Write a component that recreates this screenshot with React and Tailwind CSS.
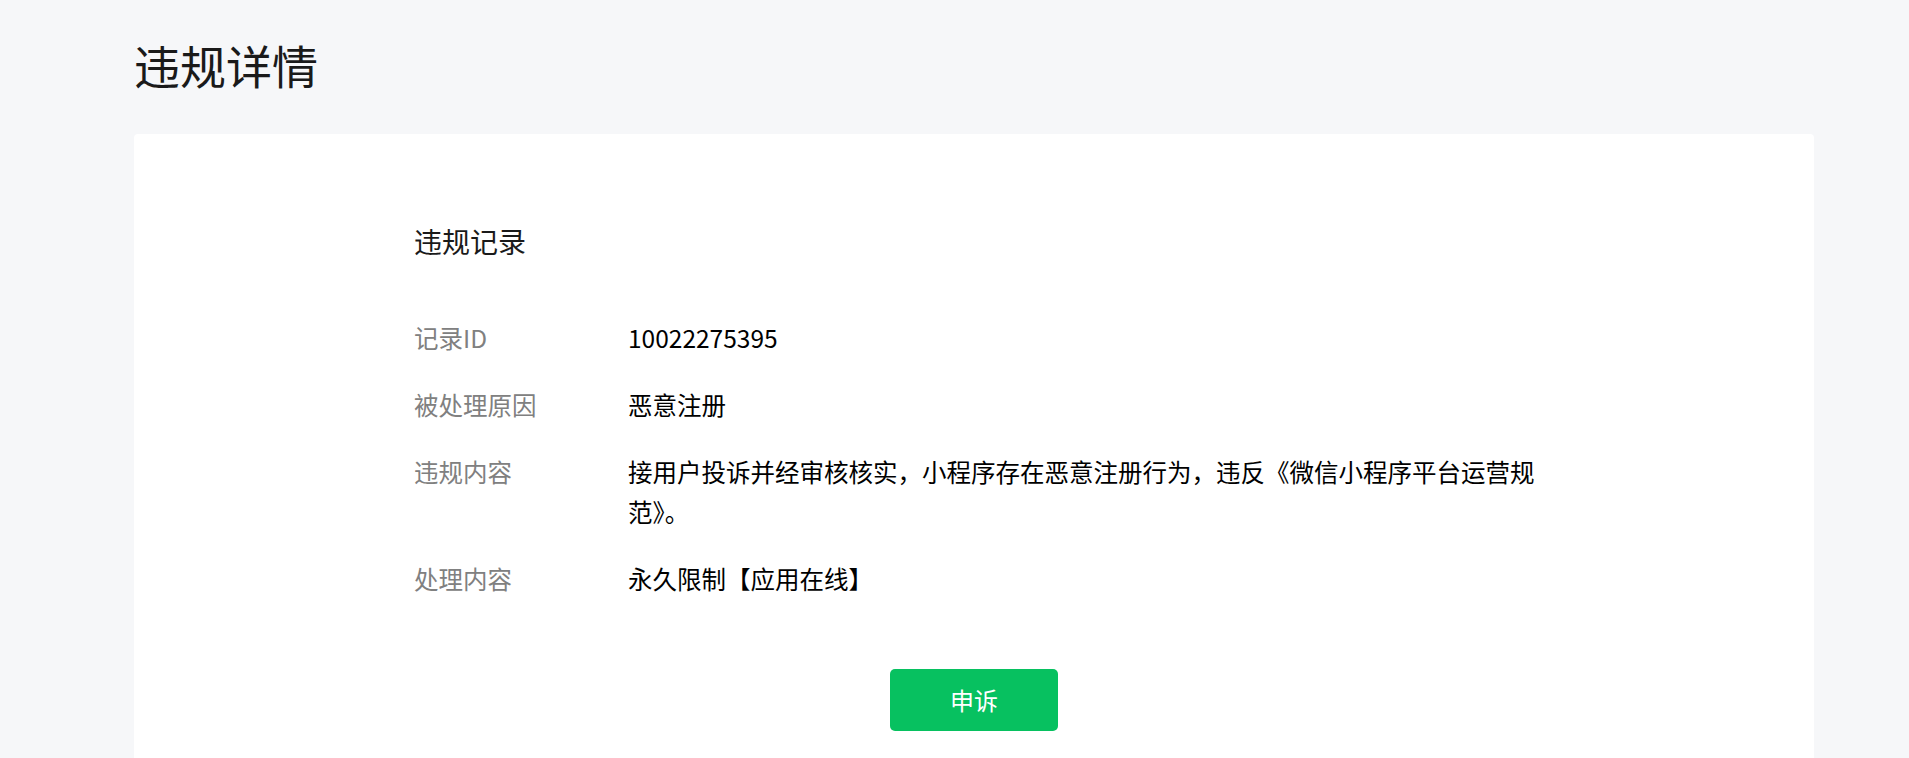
const record = [
  { label: "记录ID", value: "10022275395" },
  { label: "被处理原因", value: "恶意注册" },
  {
    label: "违规内容",
    value: "接用户投诉并经审核核实，小程序存在恶意注册行为，违反《微信小程序平台运营规范》。",
  },
  { label: "处理内容", value: "永久限制【应用在线】" },
];

const App = () => {
  return (
    <main className="min-h-screen bg-[#f6f7f9] pl-[134px] pr-[95px] pt-[33px] font-['Noto_Sans_CJK_SC','Noto_Sans',sans-serif]">
      {/* 页面标题 */}
      <h1 className="text-[46px] leading-[62px] font-normal text-[#1a1a1a]">违规详情</h1>

      <section className="mt-[39px] rounded-[4px] bg-white pt-[87px] pb-[60px] pl-[280px] pr-[200px]">
        <h2 className="text-[28px] leading-[40px] font-normal text-[#1a1a1a]">违规记录</h2>

        <dl className="mt-[57px] flex flex-col gap-[27px] text-[24.5px] leading-[40px]">
          {record.map((row) => (
            <div key={row.label} className="flex">
              <dt className="w-[214px] shrink-0 text-[#808080]">{row.label}</dt>
              <dd className="w-[925px] shrink-0 text-[#000000]">{row.value}</dd>
            </div>
          ))}
        </dl>

        {/* 按钮居中于整张卡片 */}
        <div className="mt-[70px] ml-[-280px] mr-[-200px] flex justify-center">
          <button className="h-[62px] w-[168px] rounded-[5px] bg-[#07c160] text-[24px] text-white">
            申诉
          </button>
        </div>
      </section>
    </main>
  );
};

export default App;
